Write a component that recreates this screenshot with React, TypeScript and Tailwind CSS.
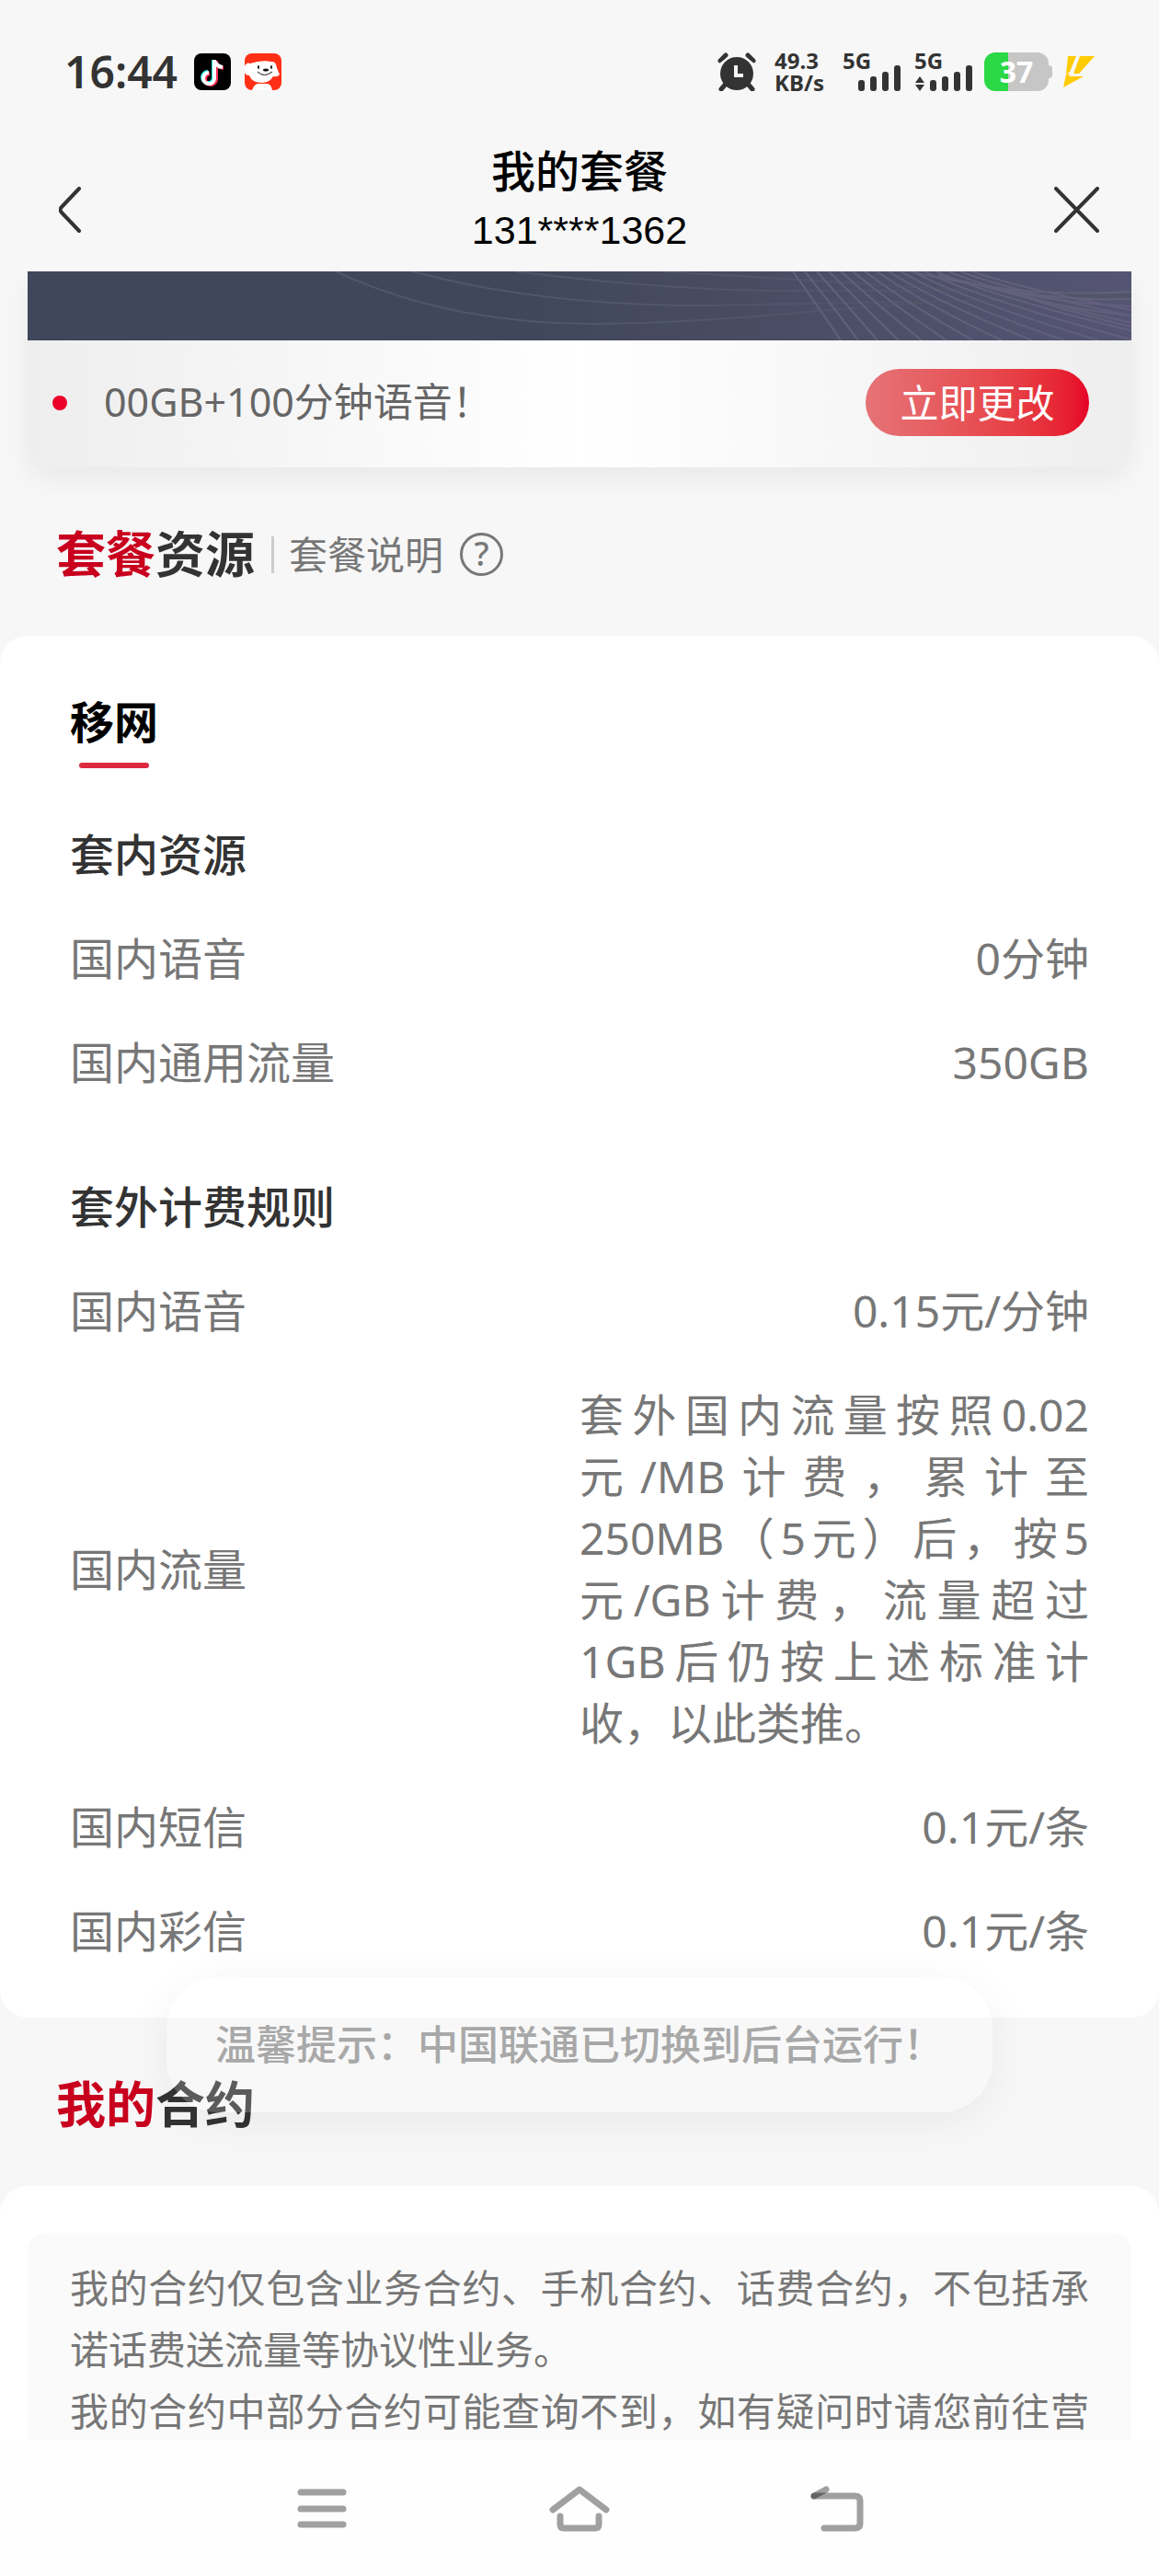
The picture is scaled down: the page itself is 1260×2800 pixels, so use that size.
import type { ReactNode } from "react";

const dataRows = [
  { label: "国内语音", value: "0分钟" },
  { label: "国内通用流量", value: "350GB" },
];

const feeRows = [
  { label: "国内语音", value: "0.15元/分钟" },
  {
    label: "国内流量",
    value:
      "套外国内流量按照0.02元/MB计费，累计至250MB（5元）后，按5元/GB计费，流量超过1GB后仍按上述标准计收，以此类推。",
  },
  { label: "国内短信", value: "0.1元/条" },
  { label: "国内彩信", value: "0.1元/条" },
];

const AlarmIcon = () => (
  <svg viewBox="0 0 42 42" className="w-[42px] h-[42px]" fill="#333">
    <circle cx="21" cy="23" r="18" />
    <path d="M3 9 L9 3 M39 9 L33 3 M10 33 L4 40 M32 33 L38 40" stroke="#333" strokeWidth="5" strokeLinecap="round" />
    <path d="M20 14 V25 H28" fill="none" stroke="#f7f7f7" strokeWidth="4" />
    <path d="M1 14 L14 4 M41 14 L28 4" stroke="#f7f7f7" strokeWidth="2" />
  </svg>
);

const DouyinIcon = () => (
  <svg viewBox="0 0 40 40" className="w-10 h-10">
    <rect width="40" height="40" rx="8" fill="#000" />
    <g fill="none" strokeWidth="4">
      <path d="M21 7 V27 A6 6 0 1 1 15 20 M21 8 Q23 14 29 15" stroke="#25f4ee" />
      <path d="M24 8 V29 A6 6 0 1 1 17 22 M24 10 Q26 15 32 16" stroke="#fe2c55" />
      <path d="M22 7 V28 A6 6 0 1 1 16 21 M22 8 Q24 14 31 15" stroke="#fff" />
    </g>
  </svg>
);

const JdIcon = () => (
  <svg viewBox="0 0 40 40" className="w-10 h-10">
    <rect width="40" height="40" rx="8" fill="#ff2f16" />
    <path
      d="M0 14 Q2 9 6 11 Q18 7 29 9 Q34 8 35 16 L38 23 Q36 26 31 25 Q27 32 19 32 Q8 32 5 24 Q1 24 0 21 Z"
      fill="#fff"
    />
    <path d="M8 40 Q10 34 14 33 H25 Q29 34 30 40 Z" fill="#fff" />
    <ellipse cx="15" cy="15" rx="1" ry="2" fill="#111" />
    <ellipse cx="29" cy="15" rx="1" ry="2" fill="#111" />
    <ellipse cx="23" cy="18" rx="3" ry="1.5" fill="#111" />
    <path d="M14 20 Q21 27 30 20" fill="none" stroke="#111" strokeWidth="1" />
  </svg>
);

const Signal = ({ arrows = false }: { arrows?: boolean }) => (
  <div className="relative w-[64px] h-[42px]">
    <span className="absolute left-0 top-0 text-[24px] leading-[18px] font-bold">5G</span>
    <svg viewBox="0 0 64 42" className="w-full h-full" fill="#333">
      {arrows && <path d="M1 33 L6 26 L11 33 Z M1 35 L6 42 L11 35 Z" />}
      <rect x="17" y="30" width="7" height="12" rx="3" />
      <rect x="30" y="26" width="7" height="16" rx="3" />
      <rect x="43" y="21" width="7" height="21" rx="3" />
      <rect x="56" y="14" width="7" height="28" rx="3" />
    </svg>
  </div>
);

const StatusBar = () => (
  <div className="flex items-center h-[140px] pt-4 px-[70px] text-[#333]">
    <span className="text-[48px] font-semibold">16:44</span>
    <div className="flex gap-[15px] ml-[18px]">
      <DouyinIcon />
      <JdIcon />
    </div>
    <div className="flex items-center ml-auto">
      <AlarmIcon />
      <div className="ml-5 text-[24px] leading-6 font-bold">
        <div>49.3</div>
        <div>KB/s</div>
      </div>
      <div className="flex gap-[14px] ml-5">
        <Signal />
        <Signal arrows />
      </div>
      <div className="flex items-center ml-3">
        <div className="w-[70px] h-[42px] rounded-xl bg-linear-to-r from-[#2bd846] from-37% to-[#c6c6c6] to-37% text-white text-[32px] leading-[42px] font-bold text-center">
          37
        </div>
        <div className="w-1 h-[14px] rounded-r bg-[#c6c6c6]" />
      </div>
      <svg viewBox="0 0 34 34" className="w-[34px] h-[34px] ml-3" fill="#ffcb05">
        <path d="M5 0 H14 L7 17 L3 20 Z M18 0 H34 L17 19 H11 Z M3 20 L7 19 L6 22 H22 L0 34 Z" />
      </svg>
    </div>
  </div>
);

const Header = () => (
  <header className="flex items-center justify-between h-[155px] px-16">
    <button aria-label="返回" className="flex w-[50px] mt-5">
      <svg viewBox="0 0 26 50" className="w-[26px] h-[50px]" fill="none" stroke="#333" strokeWidth="4" strokeLinecap="round">
        <path d="M22 2 L3 22 Q0 25 3 28 L22 48" />
      </svg>
    </button>
    <div className="text-center text-black">
      <h1 className="text-[48px] leading-[64px] font-medium">我的套餐</h1>
      <p className="font-['Liberation_Sans'] text-[43px] leading-[64px]">131****1362</p>
    </div>
    <button aria-label="关闭" className="flex mt-5">
      <svg viewBox="0 0 50 50" className="w-[50px] h-[50px]" stroke="#333" strokeWidth="4" strokeLinecap="round">
        <path d="M2 2 L47 48 M47 2 L2 48" />
      </svg>
    </button>
  </header>
);

const Banner = () => {
  // fan of lines that spreads out to the right edge
  const fan = Array.from({ length: 16 }, (_, i) => i);

  return (
    <div className="mx-[30px] rounded-b-3xl shadow-[0_12px_30px_rgba(0,0,0,0.06)]">
      <div className="h-[75px] bg-linear-to-r from-[#41475a] from-45% to-[#555573]">
        <svg viewBox="0 0 1200 75" preserveAspectRatio="none" className="w-full h-full" fill="none" strokeWidth="2">
          <g stroke="#515669">
            <path d="M335 0 Q460 58 620 57 Q720 56 860 43 T1200 26" />
            <path d="M418 0 Q560 38 740 37 Q900 34 1200 28" />
            <path d="M530 0 Q700 22 850 21 T1200 26" />
            <path d="M690 0 Q820 8 980 18 T1200 24" />
          </g>
          <g stroke="#62607b">
            {fan.map((i) => (
              <path
                key={i}
                d={`M${832 + i * 13} 0 Q${862 + i * 16} ${42 - i} ${884 + i * 18 + i * i} 75`}
              />
            ))}
            <path d="M960 0 Q1080 30 1200 22 M990 4 Q1100 34 1200 30 M1020 12 Q1110 34 1200 38 M1040 16 Q1120 40 1200 48 M1060 20 Q1130 44 1200 60" />
          </g>
        </svg>
      </div>
      <div className="flex items-center h-[138px] pb-[3px] pl-[27px] pr-[46px] rounded-b-3xl bg-linear-to-r from-[#eee] via-white to-[#eee]">
        <span className="size-4 rounded-full bg-[#ea0029]" />
        <p className="ml-10 text-[43px] text-[#666]">00GB+100分钟语音！</p>
        <button className="ml-auto w-[243px] h-[73px] rounded-full bg-linear-to-r from-[#e57377] to-[#e60027] text-[42px] leading-[70px] text-white">
          立即更改
        </button>
      </div>
    </div>
  );
};

const SectionTitle = ({ accent, text, children }: { accent: string; text: string; children?: ReactNode }) => (
  <div className="flex items-center h-[183px] pt-[6px] px-[61px]">
    <h2 className="text-[54px] font-bold text-[#333]">
      <span className="text-[#c8001e]">{accent}</span>
      {text}
    </h2>
    {children}
  </div>
);

const Rows = ({ title, rows }: { title: string; rows: { label: string; value: string }[] }) => (
  <section className="flex flex-col gap-[46px]">
    <h3 className="font-medium text-[#333]">{title}</h3>
    {rows.map((row) => (
      <dl key={row.label} className="flex items-center justify-between">
        <dt>{row.label}</dt>
        <dd className="flex justify-end w-1/2 text-justify">{row.value}</dd>
      </dl>
    ))}
  </section>
);

const NavBar = () => (
  <nav className="flex items-center justify-center gap-[218px] h-[147px] shrink-0 bg-[#fefefe]">
    <button aria-label="菜单">
      <svg viewBox="0 0 58 50" className="w-[58px] h-[50px]" stroke="#a0a0a0" strokeWidth="7" strokeLinecap="round">
        <path d="M6 7 H52 M6 25 H52 M6 42 H52" />
      </svg>
    </button>
    <button aria-label="主页">
      <svg viewBox="0 0 66 50" className="w-[66px] h-[50px]" fill="none" stroke="#a0a0a0" strokeWidth="7" strokeLinecap="round" strokeLinejoin="round">
        <path d="M4 26 L33 4 L62 26 M12 33 V42 Q12 46 16 46 H50 Q54 46 54 42 V33" />
      </svg>
    </button>
    <button aria-label="后退">
      <svg viewBox="0 0 58 50" className="w-[58px] h-[50px]" fill="none" stroke="#000" strokeOpacity="0.37" strokeWidth="7" strokeLinecap="round">
        <path d="M17 4 L4 11" />
        <path d="M4 11 H48 Q54 11 54 16 V41 Q54 46 48 46 H15" />
      </svg>
    </button>
  </nav>
);

export default function App() {
  return (
    <div className="relative flex flex-col h-screen overflow-hidden bg-[#f7f7f7] font-['Noto_Sans','Noto_Sans_CJK_SC',sans-serif]">
      <StatusBar />
      <Header />

      <main className="flex-1 min-h-0 overflow-hidden">
        <Banner />

        <SectionTitle accent="套餐" text="资源">
          <a href="#desc" className="flex items-center ml-[18px] text-[42px] leading-[67px] text-[#777]">
            <span className="w-[3px] h-10 mr-4 bg-[#ccc]" />
            套餐说明
            <span className="size-[47px] ml-[18px] rounded-full border-3 border-[#777] text-[36px] leading-10 font-medium text-center">
              ?
            </span>
          </a>
        </SectionTitle>

        <div className="px-[76px] pt-[60px] pb-[61px] rounded-[30px] bg-white text-[48px] leading-[67px] text-[#777]">
          <button className="flex flex-col items-center font-bold text-black">
            移网
            <span className="w-[76px] h-[6px] mt-[11px] rounded-full bg-[#dd2940]" />
          </button>
          <div className="flex flex-col gap-[90px] mt-[60px]">
            <Rows title="套内资源" rows={dataRows} />
            <Rows title="套外计费规则" rows={feeRows} />
          </div>
        </div>

        <SectionTitle accent="我的" text="合约" />

        <div className="px-[30px] pt-[51px] rounded-t-[30px] bg-white">
          <div className="px-[46px] py-[26px] rounded-[20px] bg-[#fafafa] text-[42px] leading-[67px] text-justify text-[#777]">
            <p>我的合约仅包含业务合约、手机合约、话费合约，不包括承诺话费送流量等协议性业务。</p>
            <p className="[text-align-last:justify]">我的合约中部分合约可能查询不到，如有疑问时请您前往营</p>
          </div>
        </div>
      </main>

      <NavBar />

      {/* toast */}
      <div
        role="status"
        className="absolute left-1/2 bottom-[504px] -translate-x-1/2 px-[53px] rounded-[56px] bg-white/20 shadow-[0_10px_50px_rgba(0,0,0,0.06)] text-[44px] leading-[147px] font-medium text-[#a8a8a8] whitespace-nowrap"
      >
        温馨提示：中国联通已切换到后台运行！
      </div>
    </div>
  );
}
